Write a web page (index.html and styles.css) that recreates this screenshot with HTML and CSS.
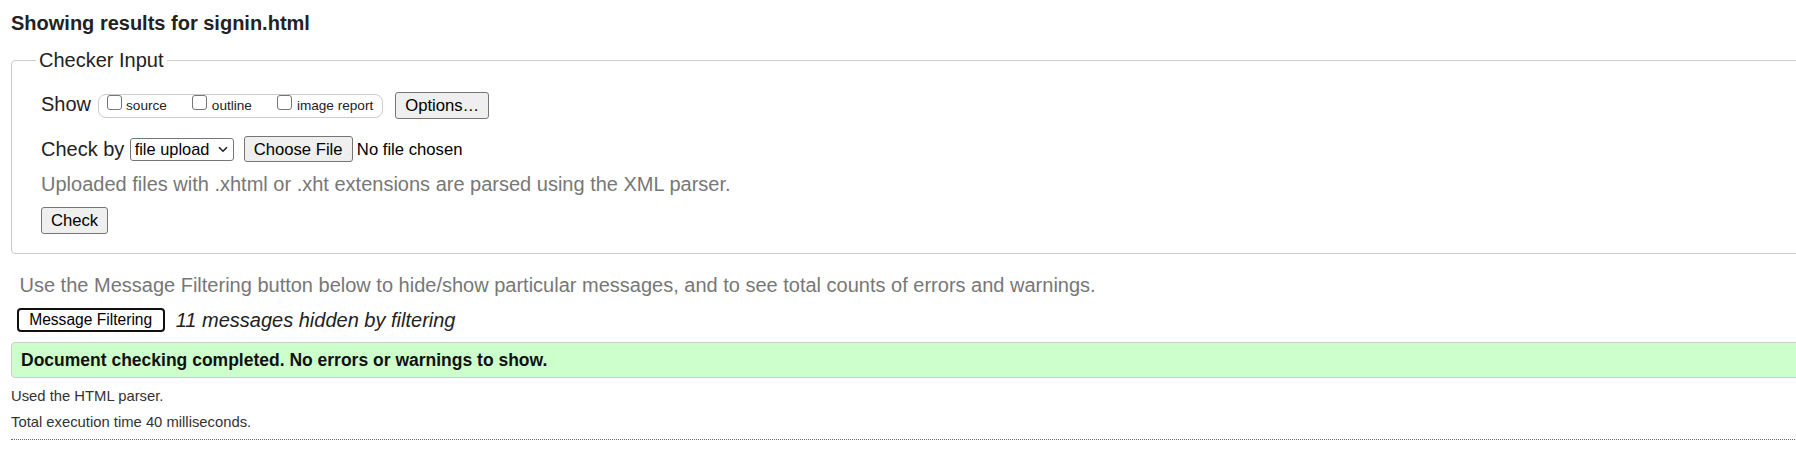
FILE: index.html
```html
<!DOCTYPE html>
<html lang="en">
<head>
<meta charset="utf-8">
<title>Showing results for signin.html</title>
<link rel="stylesheet" href="styles.css">
</head>
<body>
<div class="page">
  <h2 class="title">Showing results for signin.html</h2>
  <fieldset class="checker">
    <legend class="legend">Checker Input</legend>
    <div class="row row-show">
      <span class="label">Show</span>
      <span class="pill">
        <label class="opt"><input type="checkbox" class="cb"><span class="opt-text">source</span></label>
        <label class="opt"><input type="checkbox" class="cb"><span class="opt-text">outline</span></label>
        <label class="opt opt-last"><input type="checkbox" class="cb"><span class="opt-text">image report</span></label>
      </span>
      <button class="btn btn-options" type="button">Options…</button>
    </div>
    <div class="row row-check">
      <span class="label">Check by</span>
      <span class="select-wrap">
        <select class="select"><option>file upload</option></select>
        <svg class="chev" width="10" height="7" viewBox="0 0 10 7" aria-hidden="true"><path d="M1 1.2 L5 5.2 L9 1.2" fill="none" stroke="#222" stroke-width="1.6"/></svg>
      </span>
      <button class="btn btn-file" type="button">Choose File</button>
      <span class="nofile">No file chosen</span>
    </div>
    <p class="hint">Uploaded files with .xhtml or .xht extensions are parsed using the XML parser.</p>
    <div class="row-submit"><button class="btn btn-check" type="button">Check</button></div>
  </fieldset>
  <p class="filter-hint">Use the Message Filtering button below to hide/show particular messages, and to see total counts of errors and warnings.</p>
  <div class="filter-row">
    <button class="btn-filter" type="button">Message Filtering</button>
    <span class="hidden-count">11 messages hidden by filtering</span>
  </div>
  <div class="success">Document checking completed. No errors or warnings to show.</div>
  <p class="meta meta-first">Used the HTML parser.</p>
  <p class="meta meta-second">Total execution time 40 milliseconds.</p>
  <hr class="dotted">
</div>
</body>
</html>
```
FILE: styles.css
```css
html, body {
  margin: 0;
  padding: 0;
  overflow: hidden;
  background: #fff;
}

body {
  font-family: "Liberation Sans", Arial, sans-serif;
  color: #222;
}

.page {
  width: 1850px;
  padding-left: 11px;
}

.title {
  margin: 11.6px 0 0 0;
  font-size: 20px;
  line-height: 23px;
  font-weight: bold;
  color: #222;
}

.checker {
  margin: 14px 0 0 0;
  padding: 0 0 18.7px 29px;
  border: 1px solid #cccccc;
  border-radius: 4px;
  min-inline-size: 0;
}

.legend {
  font-size: 20px;
  line-height: 23px;
  padding: 0 3px;
  margin-left: -5px;
  color: #222;
}

.row {
  display: flex;
  align-items: flex-start;
}

.label {
  font-size: 20px;
  line-height: 23px;
  color: #222;
}

/* Show row */
.row-show {
  margin-top: 20.4px;
  height: 27px;
}

.row-show .label {
  margin-top: 0.6px;
}

.pill {
  display: inline-flex;
  align-items: flex-start;
  box-sizing: border-box;
  height: 24px;
  margin: 2.3px 0 0 6.5px;
  padding: 0 9px 0 8px;
  border: 1px solid #cccccc;
  border-radius: 8px;
}

.opt {
  display: inline-flex;
  align-items: flex-start;
  margin-right: 25.5px;
  font-size: 13.6px;
  line-height: 15.4px;
  color: #222;
}

.opt-last {
  margin-right: 0;
}

.cb {
  appearance: none;
  -webkit-appearance: none;
  box-sizing: border-box;
  width: 15px;
  height: 15px;
  margin: 0 4.5px 0 0;
  border: 1px solid #767676;
  border-radius: 3px;
  background: #fff;
}

.opt-text {
  margin-top: 3px;
}

.btn {
  font-family: "Liberation Sans", Arial, sans-serif;
  font-size: 16.67px;
  line-height: 19px;
  color: #000;
  background: #efefef;
  border: 1px solid #767676;
  border-radius: 3px;
  padding: 3px 9px;
  margin: 0;
}

.btn-options {
  margin-left: 12px;
  width: 94px;
  height: 27px;
  padding: 3px 0;
  text-align: center;
}

/* Check by row */
.row-check {
  margin-top: 17px;
  height: 26.3px;
}

.row-check .label {
  margin-top: 1.6px;
}

.select-wrap {
  position: relative;
  display: inline-block;
  margin: 1.7px 0 0 5.3px;
  height: 23px;
}

.select {
  appearance: none;
  -webkit-appearance: none;
  box-sizing: border-box;
  width: 104px;
  height: 23px;
  margin: 0;
  padding: 0 0 0 4px;
  font-family: "Liberation Sans", Arial, sans-serif;
  font-size: 16.4px;
  line-height: 21px;
  color: #000;
  background: #fff;
  border: 1px solid #767676;
  border-radius: 3px;
}

.chev {
  position: absolute;
  right: 6px;
  top: 8px;
  pointer-events: none;
}

.btn-file {
  margin-left: 10px;
  height: 26.3px;
  padding: 2.5px 9px;
}

.nofile {
  margin: 3.6px 0 0 4.3px;
  font-size: 16.67px;
  line-height: 19.2px;
  color: #000;
}

.hint {
  margin: 10.4px 0 0 0;
  font-size: 20px;
  line-height: 23px;
  color: #777;
}

.row-submit {
  margin-top: 11.4px;
  display: flex;
}

.btn-check {
  height: 27px;
  width: 67px;
  padding: 3px 0;
  text-align: center;
}

/* below the fieldset */
.filter-hint {
  margin: 20.5px 0 0 8.5px;
  font-size: 20px;
  line-height: 23px;
  color: #777;
}

.filter-row {
  display: flex;
  align-items: center;
  margin: 11.2px 0 0 5.7px;
  height: 24px;
}

.btn-filter {
  box-sizing: border-box;
  height: 24px;
  width: 148px;
  margin: 0;
  padding: 0;
  font-family: "Liberation Sans", Arial, sans-serif;
  font-size: 15.6px;
  line-height: 18px;
  color: #000;
  background: #fff;
  border: 2px solid #111;
  border-radius: 4px;
  text-align: center;
}

.hidden-count {
  margin-left: 11px;
  font-size: 20px;
  line-height: 23px;
  font-style: italic;
  color: #222;
}

.success {
  box-sizing: border-box;
  margin-top: 9.3px;
  height: 36px;
  padding: 7px 0 0 9px;
  font-size: 17.5px;
  line-height: 20px;
  font-weight: bold;
  color: #111;
  background: #ccffcc;
  border: 1px solid #cccccc;
  border-radius: 4px;
}

.meta {
  margin: 0;
  font-size: 14.8px;
  line-height: 17px;
  color: #333;
}

.meta-first {
  margin-top: 10px;
}

.meta-second {
  margin-top: 9.6px;
}

.dotted {
  margin: 7.9px 0 0 0;
  height: 0;
  border: 0;
  border-top: 1px dotted #666;
}
```
